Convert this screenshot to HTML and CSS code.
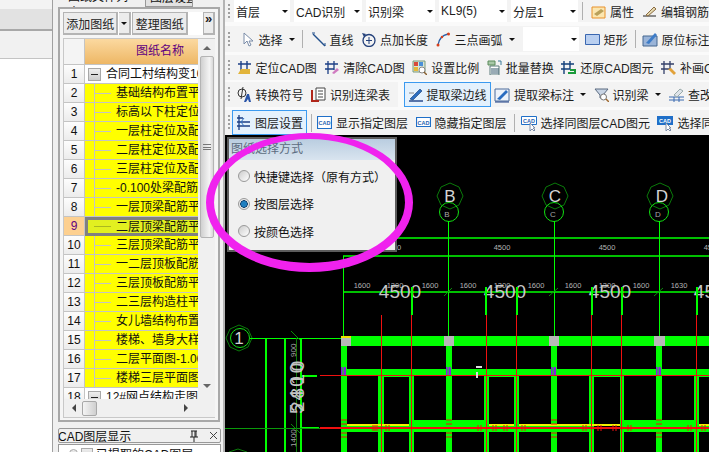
FILE: index.html
```html
<!DOCTYPE html>
<html lang="zh">

<head>
  <meta charset="UTF-8">
  <title>CAD识别</title>
  <link rel="stylesheet" href="styles.css">
</head>

<body>
  <div class="app">
    <!-- 最左边的空白栏 -->
    <div class="rail">
      <div class="rail-bar"></div>
      <div class="rail-sub"></div>
      <div class="rail-body"></div>
    </div>

    <!-- 图纸管理面板 -->
    <div class="side">
      <div class="tabs">
        <div class="tab tab-on">图纸文件列表</div>
        <div class="tab">图层设置</div>
      </div>
      <div class="drawings">
        <div class="drawing-tools">
          <div class="dbtn dbtn-add">添加图纸</div>
          <div class="dbtn dbtn-caret"><span class="caret"></span></div>
          <div class="dbtn dbtn-sort">整理图纸</div>
          <div class="dbtn dbtn-more">»</div>
        </div>
        <div class="grid">
          <div class="grid-main">
            <div class="grid-rows">
              <div class="row row-head"><span class="num"></span><span class="name">图纸名称</span></div>
              <div class="row row-top"><span class="num">1</span><span class="name"><i class="fold"></i>合同工村结构变10</span></div>
              <div class="row"><span class="num">2</span><span class="name">基础结构布置平面</span></div>
              <div class="row"><span class="num">3</span><span class="name">标高以下柱定位图</span></div>
              <div class="row"><span class="num">4</span><span class="name">一层柱定位及配筋</span></div>
              <div class="row"><span class="num">5</span><span class="name">二层柱定位及配筋</span></div>
              <div class="row"><span class="num">6</span><span class="name">三层柱定位及配筋</span></div>
              <div class="row"><span class="num">7</span><span class="name">-0.100处梁配筋图</span></div>
              <div class="row"><span class="num">8</span><span class="name">一层顶梁配筋平面</span></div>
              <div class="row row-sel"><span class="num">9</span><span class="name">二层顶梁配筋平面</span></div>
              <div class="row"><span class="num">10</span><span class="name">三层顶梁配筋平面</span></div>
              <div class="row"><span class="num">11</span><span class="name">一二层顶板配筋图</span></div>
              <div class="row"><span class="num">12</span><span class="name">三层顶板配筋平面</span></div>
              <div class="row"><span class="num">13</span><span class="name">二三层构造柱平面</span></div>
              <div class="row"><span class="num">14</span><span class="name">女儿墙结构布置图</span></div>
              <div class="row"><span class="num">15</span><span class="name">楼梯、墙身大样图</span></div>
              <div class="row"><span class="num">16</span><span class="name">二层平面图-1.00</span></div>
              <div class="row"><span class="num">17</span><span class="name">楼梯三层平面图纸</span></div>
              <div class="row row-top"><span class="num">18</span><span class="name"><i class="fold"></i>12#网点结构走图纸</span></div>
            </div>
            <div class="hscroll">
              <span class="arrow-l"></span>
              <span class="hthumb"></span>
              <span class="arrow-r"></span>
            </div>
          </div>
          <div class="vscroll">
            <span class="arrow-u"></span>
            <span class="vthumb"><span class="grip"></span></span>
            <span class="arrow-d"></span>
          </div>
        </div>
      </div>

      <div class="layers-title">
        <span class="layers-name">CAD图层显示</span>
        <svg class="pin" width="10" height="12" viewBox="0 0 10 12"><path d="M2 1h6M3 1v6M7 1v6M6 1v6M1 7h8M5 7v5" stroke="#222" fill="none"/></svg>
        <svg class="close" width="9" height="9" viewBox="0 0 9 9"><path d="M1 1l7 7M8 1l-7 7" stroke="#444" fill="none"/></svg>
      </div>
      <div class="layers-body"><i class="fold fold-small"></i><i class="check"></i>已提取的CAD图层</div>
    </div>

    <div class="splitter"></div>

    <!-- 右边：工具栏和绘图区 -->
    <div class="work">
      <div class="bar bar-selects">
        <span class="grab"></span>
        <div class="sel sel-floor">首层<span class="caret"></span></div>
        <div class="sel sel-cad">CAD识别<span class="caret"></span></div>
        <div class="sel sel-beam">识别梁<span class="caret"></span></div>
        <div class="sel sel-kl">KL9(5)<span class="caret"></span></div>
        <div class="sel sel-sub">分层1<span class="caret"></span></div>
        <span class="sep"></span>
        <div class="tool">
          <svg class="ico" viewBox="0 0 15 15"><path d="M1 3h13v11H1z" fill="#fbe6b0" stroke="#e8912a"/><path d="M3 10l7-5 3 2-7 5z" fill="#b9a05a"/></svg>属性
        </div>
        <div class="tool">
          <svg class="ico" viewBox="0 0 15 15"><path d="M1 12h13" stroke="#222"/><path d="M4 11l8-8 2 2-8 7z" fill="#e5d9b0" stroke="#8a6a40"/></svg>编辑钢筋
        </div>
      </div>

      <div class="bar bar-draw">
        <span class="grab"></span>
        <div class="tool tool-tight tool-lead">
          <svg class="ico" viewBox="0 0 15 15"><path d="M4 1v11l3-3 2 5 2-1-2-4h4z" fill="#fff" stroke="#7a8ca8"/></svg>选择<span class="caret"></span>
        </div>
        <span class="sep"></span>
        <div class="tool">
          <svg class="ico" viewBox="0 0 15 15"><path d="M2 2l12 12" stroke="#23508c" stroke-width="1.4"/><path d="M1 1h3M14 14v-3" stroke="#23508c"/></svg>直线
        </div>
        <div class="tool">
          <svg class="ico" viewBox="0 0 15 15"><circle cx="8" cy="8.500" r="6" fill="none" stroke="#23407a" stroke-width="1.300"/><path d="M8 5v7M5 8.500h6" stroke="#23407a"/><path d="M1 1l4 1-2 3z" fill="#23407a"/></svg>点加长度
        </div>
        <div class="tool tool-tight">
          <svg class="ico" viewBox="0 0 15 15"><path d="M2 13C3 6 7 3 12 2" fill="none" stroke="#2a5fa8" stroke-width="1.300"/><circle cx="2" cy="13" r="1.500" fill="#d8401c"/><circle cx="12.500" cy="2" r="1.500" fill="#d8401c"/><circle cx="6" cy="5" r="1.200" fill="#d8401c"/></svg>三点画弧<span class="caret"></span>
        </div>
        <div class="sel sel-blank"><span class="caret"></span></div>
        <div class="tool tool-pull">
          <svg class="ico" viewBox="0 0 15 15"><path d="M.500 2.500h14v10H.500z" fill="#b9cff0" stroke="#3a67b0"/></svg>矩形
        </div>
        <span class="sep"></span>
        <div class="tool tool-tight tool-pull">
          <svg class="ico ico-wide" viewBox="0 0 16 16"><path d="M1 5h14v10H1z" fill="#9ab4d8" stroke="#44668f"/><path d="M4 12L13 2l2 2-8 9z" fill="#3d7cc8"/></svg>原位标注<span class="caret"></span>
        </div>
      </div>

      <div class="bar bar-cad">
        <span class="grab"></span>
        <div class="tool tool-pull">
          <svg class="ico" viewBox="0 0 15 15"><path d="M4 1v10M10 1v10M1 4h13" stroke="#1c3f86" stroke-width="1.400" fill="none"/><path d="M4 9h9v5H1z" fill="#e2b43a"/></svg>定位CAD图
        </div>
        <div class="tool">
          <svg class="ico" viewBox="0 0 15 15"><path d="M4 1v13M10 1v9M1 4h13M1 9h9" stroke="#1c3f86" stroke-width="1.300" fill="none"/><path d="M8 13l5-5 2 2-5 4z" fill="#d07ac0"/></svg>清除CAD图
        </div>
        <div class="tool">
          <svg class="ico" viewBox="0 0 15 15"><path d="M1 1h12v11H1z" fill="#d8e6d8" stroke="#7a9a7a"/><path d="M2 2h4v4H2z" fill="#d84a3a"/><path d="M7 2h4v4H7z" fill="#4a90d8"/><path d="M2 7h4v4H2z" fill="#e6b83a"/><circle cx="10" cy="10" r="3" fill="#fff" stroke="#888"/><path d="M12 12l3 3" stroke="#886030" stroke-width="1.500"/></svg>设置比例
        </div>
        <div class="tool">
          <svg class="ico" viewBox="0 0 15 15"><path d="M3 6h9v9H3z" fill="#fff" stroke="#5a7a7a"/><path d="M5 8v6M7 8v6M9 8v6M11 8v6" stroke="#33566a"/><path d="M1 1h7v4H1z" fill="#a8c8a8" stroke="#5a8a5a"/><path d="M11 1h3v4" fill="none" stroke="#3a7a9a"/></svg>批量替换
        </div>
        <div class="tool">
          <svg class="ico" viewBox="0 0 15 15"><path d="M3 1v13M9 1v8M0 4h13M0 9h9" stroke="#123f7a" stroke-width="1.400" fill="none"/><path d="M7 13h7v-3H9" fill="none" stroke="#1a9a3a" stroke-width="2"/></svg>还原CAD图元
        </div>
        <div class="tool">
          <svg class="ico" viewBox="0 0 15 15"><path d="M3 1v13M9 1v8M0 4h13M0 9h9" stroke="#34406a" stroke-width="1.300" fill="none"/><path d="M7 9l3-1 5 5-2 2-5-5z" fill="#e2a23a"/></svg>补画CAD图元
        </div>
      </div>

      <div class="bar bar-beam">
        <span class="grab"></span>
        <div class="tool tool-pull">
          <svg class="ico" viewBox="0 0 15 15"><circle cx="5" cy="6" r="4" fill="none" stroke="#333"/><path d="M6 0L4 12" stroke="#333"/><path d="M7 15l3-8h2l2 8h-2l-1-3-2 3z" fill="#2a55a8"/></svg>转换符号
        </div>
        <div class="tool">
          <svg class="ico" viewBox="0 0 15 15"><path d="M5 1h9v12H5z" fill="#fff" stroke="#444"/><path d="M7 4h5M7 7h5M7 10h5" stroke="#444"/><path d="M1 3v11h7" fill="none" stroke="#b0261a" stroke-width="2"/></svg>识别连梁表
        </div>
        <span class="bar-gap"></span>
        <div class="tool tool-on">
          <svg class="ico" viewBox="0 0 15 15"><path d="M1 14h14" stroke="#1c3f86" stroke-width="1.400"/><path d="M2 12L12 2l2 2L5 13z" fill="#2a6dc0" stroke="#143a70" stroke-width=".6"/><path d="M1 6h5" stroke="#888"/></svg>提取梁边线
        </div>
        <div class="tool tool-tight tool-close">
          <svg class="ico ico-wide" viewBox="0 0 16 16"><path d="M1 2h14v12H1z" fill="#eef3fa" stroke="#4a6a9a"/><path d="M3 12L12 3l2 2-8 8z" fill="#2a6dc0"/><path d="M1 15h14" stroke="#1c3f86"/></svg>提取梁标注<span class="caret"></span>
        </div>
        <div class="tool tool-tight">
          <svg class="ico" viewBox="0 0 15 15"><path d="M1 2h13L9 8v3H6V8z" fill="#c8d4e4" stroke="#5a6a80"/><circle cx="9.500" cy="10" r="3" fill="#fff" stroke="#777"/><path d="M12 12l3 3" stroke="#a06a30" stroke-width="1.500"/></svg>识别梁<span class="caret"></span>
        </div>
        <div class="tool">
          <svg class="ico ico-wide" viewBox="0 0 16 16"><path d="M1 10h15M1 13h15M6 10v5M11 10v5" stroke="#3a6ab0"/><path d="M6 8l6-6 3 2-6 6z" fill="#dfe4ea" stroke="#9aa"/></svg>查改支座
        </div>
      </div>

      <div class="bar bar-layer">
        <span class="grab"></span>
        <div class="tool tool-on tool-set">
          <svg class="ico" viewBox="0 0 15 15"><path d="M3 0v15M1 3h6M1 7h13M1 11h13" stroke="#1c3f86" stroke-width="1.300" fill="none"/><path d="M8 3l-3 4 3 4" fill="none" stroke="#2a6dc0"/></svg>图层设置
        </div>
        <span class="sep sep-close"></span>
        <div class="tool tool-pull">
          <svg class="ico" viewBox="0 0 15 15"><path d="M.500 1.500h14v12H.500z" fill="#fff" stroke="#1f6fc8" stroke-width="1.200"/><text x="7.500" y="10" class="ico-cad">CAD</text></svg>显示指定图层
        </div>
        <div class="tool">
          <svg class="ico" viewBox="0 0 15 15"><path d="M.500 2.500h14v9H.500z" fill="#fff" stroke="#1f6fc8" stroke-width="1.200"/><text x="7.500" y="9.500" class="ico-cad">CAD</text></svg>隐藏指定图层
        </div>
        <span class="sep"></span>
        <div class="tool tool-pull">
          <svg class="ico ico-wide" viewBox="0 0 16 16"><path d="M.500 1.500h15v8H.500z" fill="#fff" stroke="#1f6fc8"/><text x="8" y="8" class="ico-cad">CAD</text><path d="M9 8v8l2-2 2 2 1-1-2-2h2z" fill="#fff" stroke="#7a8ca8"/></svg>选择同图层CAD图元
        </div>
        <div class="tool">
          <svg class="ico ico-wide" viewBox="0 0 16 16"><path d="M0 1h16v9H0z" fill="#1f6fc8"/><text x="8" y="8" class="ico-cad ico-cad-w">CAD</text><path d="M9 8v8l2-2 2 2 1-1-2-2h2z" fill="#fff" stroke="#7a8ca8"/></svg>选择同颜色CAD图元
        </div>
      </div>

      <!-- 绘图区 -->
      <div class="canvas">
        <svg class="plan" width="484" height="317" viewBox="225 135 484 317">
          <!-- 轴号 -->
          <g fill="none" stroke="#0a7a0a">
            <path d="M450 183l9 4 4 9-4 9-9 4-9-4-4-9 4-9z"/>
            <path d="M555 183l9 4 4 9-4 9-9 4-9-4-4-9 4-9z"/>
            <path d="M660 183l9 4 4 9-4 9-9 4-9-4-4-9 4-9z"/>
            <path d="M239 325l9 4 4 9-4 9-9 4-9-4-4-9 4-9z"/>
            <path d="M238 449l9 3M238 449l-9 3"/>
          </g>
          <g fill="none" stroke="#12e012">
            <circle cx="449" cy="212" r="9.500"/>
            <circle cx="554" cy="212" r="9.500"/>
            <circle cx="659" cy="212" r="9.500"/>
            <circle cx="240" cy="338" r="9.500"/>
          </g>
          <g class="t-axis">
            <text x="450" y="202">B</text>
            <text x="555" y="202">C</text>
            <text x="662" y="202">D</text>
            <text x="239" y="344">1</text>
          </g>
          <g class="t-tiny">
            <text x="447" y="217">B</text>
            <text x="553" y="217">C</text>
            <text x="658" y="217">D</text>
          </g>

          <!-- 标注线 -->
          <g fill="none" stroke="#0f0" stroke-width="1">
            <path d="M448.500 221v231M554.500 221v231M659.500 221v115M343.500 256v80"/>
            <path d="M250 338.500h93"/>
          </g>
          <g fill="none" stroke="#0f0" stroke-width="1.500">
            <path d="M397 238h312M343 256h366M343 292h366"/>
          </g>
          <path d="M444 296l8-8M549 296l9-8M654 296l9-8M291 331l9 9M291 424l9 9" stroke="#0a8a0a" fill="none"/>
          <g class="t-small">
            <text x="397" y="250">00</text>
            <text x="502" y="250">4500</text>
            <text x="607" y="250">4500</text>
            <text x="712" y="250">4500</text>
            <text x="362" y="288">1600</text>
            <text x="395" y="288">1300</text>
            <text x="430" y="288">1600</text>
            <text x="468" y="288">1600</text>
            <text x="502" y="288">1300</text>
            <text x="536" y="288">1600</text>
            <text x="573" y="288">1600</text>
            <text x="607" y="288">1300</text>
            <text x="641" y="288">1600</text>
            <text x="679" y="288">1630</text>
          </g>
          <g class="t-big">
            <text x="400" y="298">4500</text>
            <text x="505" y="298">4500</text>
            <text x="610" y="298">4500</text>
            <text x="715" y="298">4500</text>
          </g>

          <!-- 左边的墙线 -->
          <path d="M266 338v114M285 338v114M301 338v114M301 376h16M301 428h18" stroke="#0f0" stroke-width="2" fill="none"/>
          <path d="M225 428.500h116" stroke="#0a9a0a" fill="none"/>
          <path d="M296.500 338v114" stroke="#0a7a0a" fill="none"/>
          <g class="t-side">
            <text transform="translate(303 414) rotate(-90)" class="t-side-big">5400</text>
            <text transform="translate(304 412) rotate(-90)" class="t-side-big">2810</text>
            <text transform="translate(296 357) rotate(-90)">900</text>
            <text transform="translate(296 447) rotate(-90)">1400</text>
          </g>

          <!-- 梁 -->
          <path d="M341 336h368v10H341zM347 369h362v6H347zM341 346h6v106h-6zM446 346h6v106h-6zM551 346h6v106h-6zM656 346h6v106h-6z" fill="#0f0"/>
          <path d="M378 375h6v77h-6zM409 375h5v77h-5zM484 375h5v77h-5zM514 375h5v77h-5zM589 375h5v77h-5zM620 375h4v77h-4zM694 375h5v77h-5z" fill="#0f0"/>
          <path d="M384 375h25v2h-25zM489 375h25v2h-25zM594 375h26v2h-26zM699 375h10v2h-10z" fill="#0f0"/>
          <path d="M347 426h37v6h-37zM409 420h80v12h-80zM514 426h37v6h-37zM557 426h37v6h-37zM620 426h74v6h-74zM620 420h74v6h-74zM699 426h10v6h-10z" fill="#0f0"/>
          <path d="M347 424h37v2h-37zM384 424h25v2h-25zM489 424h25v2h-25zM519 424h75v2h-75zM594 424h26v2h-26zM699 424h10v2h-10z" fill="#f0f000"/>
          <path d="M384 426h25v6h-25zM489 426h25v6h-25z" fill="#0f0"/>
          <path d="M341 336h10v10h-10zM444 336h10v10h-10zM549 336h10v10h-10zM654 336h11v10h-11z" fill="#b8b8b8"/>
          <path d="M341 336h10v2h-10z" fill="#f0e000"/>
          <path d="M341 367h5v8h-5zM446 367h5v8h-5zM551 367h5v8h-5zM656 367h5v8h-5z" fill="#8a1ee0"/>
          <path d="M343 367v8M448 367v8M553 367v8M658 367v8" stroke="#0f0"/>

          <!-- 钢筋 -->
          <g fill="none" stroke="#f01010">
            <path d="M320 375.500h389"/>
            <path d="M381.500 315v137M411.500 315v137M486.500 315v137M516.500 315v137M591.500 315v137M621.500 315v137M696.500 315v137"/>
            <path d="M341 420h6M341 424h6M341 433h6M341 437h6M446 420h6M446 424h6M446 433h6M446 437h6M551 420h6M551 424h6M551 433h6M551 437h6M656 420h6M656 424h6M656 433h6M656 437h6"/>
            <path d="M373 425v6M375 425v6M377 425v6M386 425v6M389 425v6M478 425v6M481 425v6M493 425v6M496 425v6M504 425v6M507 425v6M522 425v6M525 425v6M583 425v6M586 425v6M598 425v6M601 425v6M613 425v6M616 425v6M628 425v6M631 425v6M688 425v6M691 425v6M702 425v6M705 425v6"/>
          </g>
          <path d="M320 428h389" stroke="#f01010" stroke-width="2" fill="none"/>

          <!-- 上面的竖线 -->
          <path d="M412 287v28M486 287v28M517 287v28M592 287v28M622 287v28M697 287v28" stroke="#0f0" stroke-width="2" fill="none"/>
          <path d="M476 366h6v2h-6zM476 372h2v6h-2z" fill="#ddd"/>
        </svg>
      </div>
    </div>
  </div>

  <!-- 弹出框和荧光笔圈 -->
  <div class="pick">
    <div class="pick-title">图纸选择方式</div>
    <div class="pick-body">
      <div class="radio-row"><i class="radio"></i>快捷键选择（原有方式）</div>
      <div class="radio-row"><i class="radio radio-on"></i>按图层选择</div>
      <div class="radio-row"><i class="radio"></i>按颜色选择</div>
    </div>
  </div>
  <div class="marker"></div>
</body>

</html>
```

FILE: styles.css
```css
* {
  box-sizing: border-box;
}

html,
body {
  margin: 0;
  padding: 0;
}

body {
  position: relative;
  width: 709px;
  height: 452px;
  overflow: hidden;
  font-family: "Liberation Sans", "Noto Sans CJK SC", sans-serif;
  font-size: 12px;
  color: #111;
  background: #fff;
}

i {
  display: block;
  flex: none;
}

.app {
  display: flex;
  height: 452px;
}

/* left rail */
.rail {
  width: 53px;
  flex: none;
  border-right: 1px solid #a0a0a0;
  display: flex;
  flex-direction: column;
}

.rail-bar {
  height: 31px;
  background: linear-gradient(#f3f3f3 0 9px, #e2e2e2 9px);
  border-bottom: 2px solid #a8a8a8;
}

.rail-sub {
  height: 28px;
  background: #f1f1f1;
  border-bottom: 1px solid #c4c4c4;
}

.rail-body {
  flex: 1;
  background: #fff;
}

/* drawing panel */
.side {
  width: 170px;
  flex: none;
  padding-left: 5px;
  background: #f0f0f0;
  display: flex;
  flex-direction: column;
  overflow: hidden;
}

.tabs {
  height: 7px;
  display: flex;
  gap: 2px;
  padding-left: 6px;
  overflow: hidden;
  flex: none;
}

.tab {
  flex: none;
  height: 18px;
  margin-top: -11px;
  line-height: 16px;
  padding: 0 4px;
}

.tab-on {
  width: 79px;
}

.tab + .tab {
  width: 48px;
  overflow: hidden;
  white-space: nowrap;
  background: #e2e2e2;
  border: 1px solid #999;
}

.drawings {
  width: 162px;
  height: 415px;
  flex: none;
  padding: 3px 3px 0 3px;
  background: #f5f5f5;
  border: 2px solid #a8a8a8;
}

.drawing-tools {
  display: flex;
  height: 23px;
  gap: 1px;
  background: #fff;
  margin-bottom: 3px;
}

.dbtn {
  height: 23px;
  display: flex;
  align-items: center;
  justify-content: center;
  background: #ececec;
  border: 1px solid #b4b4b4;
  border-width: 1px 2px 2px 1px;
  color: #222;
}

.dbtn-add {
  width: 57px;
}

.dbtn-caret {
  width: 12px;
  border-left: 0;
}

.dbtn-sort {
  width: 58px;
}

.dbtn-more {
  width: 12px;
  margin-left: 14px;
  align-items: flex-start;
  font-size: 13px;
  line-height: 12px;
  font-weight: bold;
}

.caret {
  display: inline-block;
  width: 0;
  height: 0;
  flex: none;
  border: 3px solid transparent;
  border-top: 3px solid #111;
  border-bottom: 0;
}

.grid {
  display: flex;
  height: 380px;
  border: 1px solid #c8c8c8;
  background: #f4f4f4;
}

.grid-main {
  width: 134px;
  flex: none;
  overflow: hidden;
}

.grid-rows {
  height: 360px;
  overflow: hidden;
}

.row {
  display: flex;
  height: 19px;
  white-space: nowrap;
}

.num {
  width: 21px;
  flex: none;
  text-align: center;
  line-height: 18px;
  background: linear-gradient(#fdfdfd, #ececec);
  border-right: 1px solid #c4c4c4;
  border-bottom: 1px solid #c4c4c4;
}

.name {
  width: 113px;
  flex: none;
  overflow: hidden;
  padding-left: 31px;
  line-height: 18px;
  background:
    linear-gradient(#c4c4c4, #c4c4c4) 9px 0 / 1px 19px no-repeat,
    linear-gradient(#c4c4c4, #c4c4c4) 9px 9px / 17px 1px no-repeat,
    linear-gradient(#ffff00, #ffff00);
  border-bottom: 1px solid #c4c4c4;
}

.row-head {
  height: 26px;
}

.row-head .num {
  background: #f4f4f4;
}

.row-head .name {
  padding-left: 0;
  padding-right: 14px;
  text-align: right;
  line-height: 24px;
  color: #600080;
  background: linear-gradient(#fbd9a0, #eeb765);
}

.row-top .name {
  display: flex;
  align-items: center;
  padding-left: 3px;
  gap: 5px;
  background: #fff;
}

.fold {
  width: 13px;
  height: 13px;
  border: 1px solid #a8a8a8;
  background: linear-gradient(#222, #222) 2px 5px / 7px 1px no-repeat, linear-gradient(#eee, #ccc);
}

.row-sel .num {
  color: #600080;
  background: #fdd090;
}

.row-sel .name {
  padding-left: 28px;
  line-height: 14px;
  border: 3px solid #808080;
  border-right: 0;
  background:
    linear-gradient(#aab820, #aab820) 6px 6px / 17px 1px no-repeat,
    #e2f020;
}

.hscroll {
  display: flex;
  align-items: center;
  height: 18px;
  padding-left: 8px;
  background: #f0f0f0;
}

.hthumb {
  width: 15px;
  height: 15px;
  margin-left: 6px;
  border: 1px solid #a8a8a8;
  border-radius: 2px;
  background: linear-gradient(90deg, #f4f4f4, #cfcfcf);
}

.arrow-l,
.arrow-r {
  width: 0;
  height: 0;
  border: 4px solid transparent;
}

.arrow-l {
  border-left: 0;
  border-right-color: #444;
}

.arrow-r {
  margin-left: 87px;
  border-right: 0;
  border-left-color: #444;
}

.vscroll {
  width: 17px;
  flex: none;
  display: flex;
  flex-direction: column;
  align-items: center;
  padding-top: 7px;
  background: #f0f0f0;
}

.arrow-u,
.arrow-d {
  width: 0;
  height: 0;
  border: 4px solid transparent;
}

.arrow-u {
  border-top: 0;
  border-bottom-color: #666;
}

.arrow-d {
  margin-top: 146px;
  border-bottom: 0;
  border-top-color: #666;
}

.vthumb {
  width: 14px;
  height: 182px;
  margin-top: 6px;
  flex: none;
  display: flex;
  align-items: center;
  justify-content: center;
  border: 1px solid #b4b4b4;
  border-radius: 2px;
  background: linear-gradient(90deg, #d0d0d0, #f4f4f4 70%, #d8d8d8);
}

.grip {
  width: 8px;
  height: 6px;
  border-top: 1px solid #777;
  border-bottom: 1px solid #777;
  background: linear-gradient(#777, #777) 0 1.500px / 8px 1px no-repeat;
}

.layers-title {
  display: flex;
  align-items: center;
  width: 163px;
  height: 15px;
  margin-top: 6px;
  flex: none;
  overflow: hidden;
  border: 1px solid #999;
  border-radius: 2px;
  background: #f0f0f0;
  white-space: nowrap;
}

.layers-name {
  width: 131px;
  flex: none;
  margin-left: -1px;
}

.pin {
  margin-right: 10px;
}

.layers-body {
  display: flex;
  align-items: center;
  gap: 3px;
  width: 163px;
  flex: 1;
  padding-left: 10px;
  margin-top: 1px;
  border: 1px solid #999;
  border-bottom: 0;
  background: #fff;
  white-space: nowrap;
}

.fold-small {
  width: 9px;
  height: 9px;
  border-radius: 50%;
}

.check {
  width: 12px;
  height: 12px;
  border: 1px solid #aaa;
  background: linear-gradient(#eee, #ccc);
}

.splitter {
  width: 2px;
  flex: none;
  background: #b4b4b4;
}

/* toolbars */
.work {
  flex: 1;
  min-width: 0;
  display: flex;
  flex-direction: column;
  background: #fafafa;
  overflow: hidden;
}

.bar {
  display: flex;
  align-items: center;
  flex: none;
  gap: 7.500px;
  padding-left: 3px;
  white-space: nowrap;
  background: #f3f3f3;
  color: #1c1c1c;
}

.bar-selects {
  height: 22px;
  gap: 4px;
  margin-bottom: 4px;
}

.bar-draw {
  height: 26px;
  margin-bottom: 3px;
}

.bar-cad {
  height: 25px;
  margin-bottom: 2px;
}

.bar-beam {
  height: 25px;
  margin-bottom: 3px;
}

.bar-layer {
  height: 25px;
}

.grab {
  width: 2px;
  height: 15px;
  flex: none;
  margin-right: 1px;
  background: repeating-linear-gradient(#a0a0a0 0 2px, transparent 2px 4px);
}

.sel {
  display: flex;
  align-items: center;
  justify-content: space-between;
  height: 22px;
  padding: 0 2px;
  flex: none;
  background: #fff;
}

.sel-floor {
  width: 56px;
  margin-left: -1px;
}

.sel-cad {
  width: 68px;
}

.sel-beam {
  width: 69px;
}

.sel-kl {
  width: 68px;
}

.sel-sub {
  width: 67px;
}

.sel-blank {
  width: 56px;
  height: 24px;
  margin-left: 1px;
  justify-content: flex-end;
}

.sep {
  width: 1px;
  height: 18px;
  flex: none;
  background: #b0b0b0;
}

.sep-close {
  margin-left: -4px;
}

.tool {
  display: flex;
  align-items: center;
  flex: none;
  gap: 4px;
  height: 22px;
}

.bar-selects .tool {
  margin-left: 4px;
}

.tool-tight .caret {
  margin-left: 2px;
}

.tool-lead {
  margin-left: 1px;
}

.tool-pull {
  margin-left: -2px;
}

.tool-close {
  margin-left: -4px;
}

.ico {
  width: 15px;
  height: 15px;
  flex: none;
}

.ico-wide {
  width: 16px;
  height: 16px;
}

.ico-cad {
  font-family: "Liberation Sans", sans-serif;
  font-size: 5.500px;
  font-weight: bold;
  text-anchor: middle;
  fill: #1f5fb0;
}

.ico-cad-w {
  fill: #fff;
}

.tool-on {
  background: #e4f1fd;
  border: 1px solid #3b9af0;
  padding: 0 3px;
  height: 25px;
}

.tool-set {
  margin-left: -6.500px;
}

.bar-gap {
  width: 6px;
  height: 25px;
  flex: none;
  margin-right: -7.500px;
  background: #fafafa;
}

/* drawing area */
.canvas {
  flex: 1;
  min-height: 0;
  background: #000;
  overflow: hidden;
}

.plan {
  display: block;
}

.plan text {
  font-family: "Liberation Sans", sans-serif;
}

.t-axis {
  font-size: 17px;
  fill: #d4d4d4;
  text-anchor: middle;
}

.t-tiny {
  font-size: 8px;
  fill: #a8a8a8;
  text-anchor: middle;
}

.t-small {
  font-size: 7.500px;
  fill: #b4b4b4;
  text-anchor: middle;
}

.t-big {
  font-size: 19px;
  fill: #c8c8c8;
  text-anchor: middle;
}

.t-side {
  font-size: 8px;
  fill: #a4a4a4;
}

.t-side-big {
  font-size: 19px;
  letter-spacing: 3px;
  fill: #c4c4c4;
}

/* floating dialog and marker ring */
.pick {
  position: absolute;
  left: 227px;
  top: 137px;
  width: 170px;
  height: 115px;
  border: 2px solid #5c5c5c;
  background: #f0f0f0;
}

.pick-title {
  height: 21px;
  padding-left: 2px;
  line-height: 21px;
  color: #5c6c80;
  background: linear-gradient(#b9cde0, #d9e4ef);
}

.pick-body {
  display: flex;
  flex-direction: column;
  gap: 9.500px;
  padding: 7px 0 0 9px;
}

.radio-row {
  display: flex;
  align-items: center;
  gap: 4px;
  height: 18px;
  white-space: nowrap;
}

.radio {
  width: 12px;
  height: 12px;
  border: 1px solid #999;
  border-radius: 50%;
  background: linear-gradient(135deg, #ccc, #fff);
}

.radio-on {
  background: radial-gradient(circle, #1f7fc0 0 2.500px, #0a3a68 3.500px, #e8e8e8 4px);
}

.marker {
  position: absolute;
  left: 206px;
  top: 133px;
  width: 207px;
  height: 139px;
  border: 8px solid #f022ee;
  border-top-width: 6px;
  border-bottom-width: 9px;
  border-radius: 50%;
}
```
